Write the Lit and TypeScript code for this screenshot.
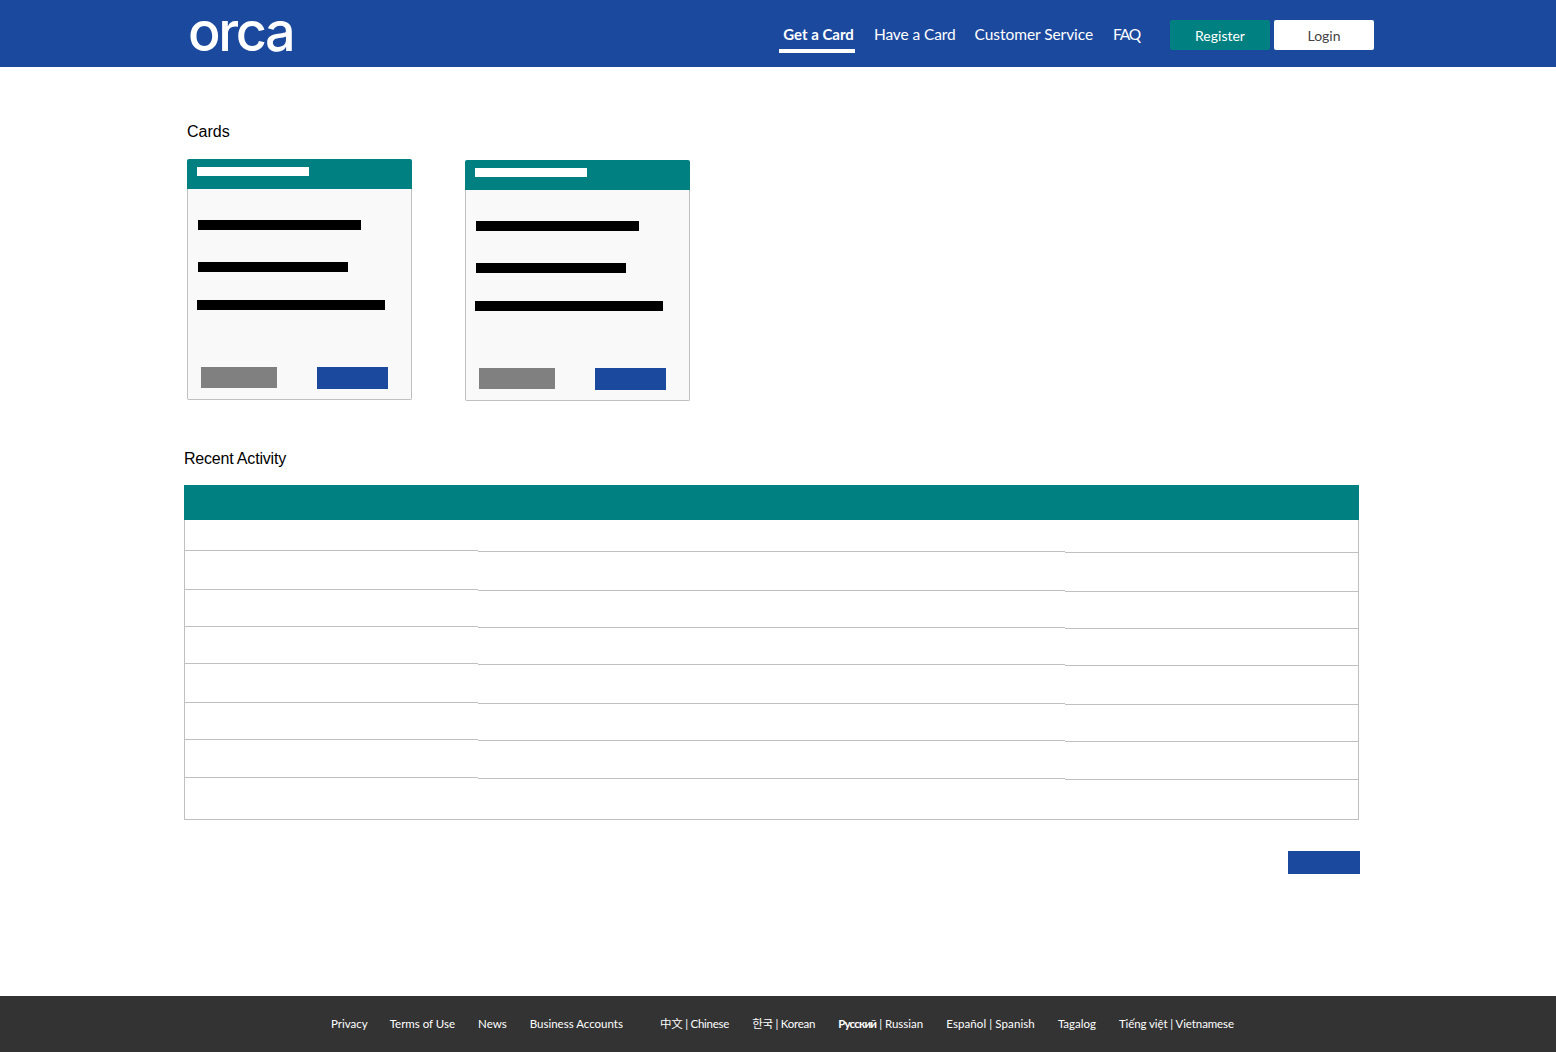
import { LitElement, html, css } from "lit";
import { customElement } from "lit/decorators.js";

const ROW_HEIGHTS = [39, 37, 37, 39, 37, 38];
const FIRST_ROW = [31, 32, 33];

@customElement("app-root")
export class AppRoot extends LitElement {
  static styles = css`
    :host {
      display: flex;
      flex-direction: column;
      min-height: 1052px;
      background: #fff;
      font-family: "Liberation Sans", Arial, sans-serif;
      color: #000;
    }
    .topbar {
      height: 67px;
      box-sizing: border-box;
      background: #1b499e;
      display: flex;
      align-items: center;
      padding: 3px 182px 0 188px;
      font-family: Lato, "Open Sans", sans-serif;
      color: #fff;
    }
    .logo {
      font-family: Inter, sans-serif;
      font-size: 54px;
      font-weight: 500;
      line-height: 67px;
      letter-spacing: -2.4px;
      margin-top: -7px;
    }
    .nav {
      margin-left: auto;
      display: flex;
      align-items: center;
    }
    .nav a {
      font-size: 15.5px;
      line-height: 20px;
      padding: 0 10px 2px;
    }
    .nav a.have {
      letter-spacing: -0.1px;
      padding-right: 9px;
    }
    .nav a.service {
      letter-spacing: -0.06px;
    }
    .nav a.faq {
      letter-spacing: -1.2px;
    }
    .nav a.active {
      font-size: 15px;
      font-weight: 700;
      padding: 3px 1px 5px 4px;
      margin-right: 9px;
      border-top: 4px solid transparent;
      border-bottom: 4px solid #fff;
    }
    .btn {
      width: 100px;
      height: 30px;
      border-radius: 2px;
      display: flex;
      align-items: center;
      justify-content: center;
      font-size: 14px;
    }
    .register {
      background: #008080;
      margin: 0 4px 0 20px;
    }
    .login {
      background: #fff;
      color: #444;
    }
    main {
      padding-left: 184px;
      width: 1176px;
    }
    h2 {
      font-size: 16px;
      font-weight: 400;
      line-height: 18px;
      margin: 0;
    }
    .cards-title {
      margin: 56px 0 18px 3px;
    }
    .cards {
      display: flex;
      gap: 53px;
      align-items: flex-start;
      margin-left: 3px;
    }
    .card + .card {
      margin-top: 1px;
    }
    .card {
      width: 225px;
    }
    .card-head {
      height: 30px;
      background: #008080;
      border-radius: 2px 2px 0 0;
      padding: 8px 0 0 10px;
      box-sizing: border-box;
    }
    .card-title {
      width: 112px;
      height: 9px;
      background: #fff;
    }
    .card-body {
      height: 211px;
      box-sizing: border-box;
      background: #f9f9f9;
      border: 1px solid #c0c0c0;
      border-top: none;
      border-radius: 0 0 2px 2px;
      padding-top: 31px;
    }
    .line {
      height: 10px;
      background: #000;
    }
    .line.a {
      width: 163px;
      margin-left: 10px;
    }
    .line.b {
      width: 150px;
      margin: 32px 0 0 10px;
    }
    .line.c {
      width: 188px;
      margin: 28px 0 0 9px;
    }
    .actions {
      display: flex;
      align-items: flex-start;
      margin: 57px 0 0 13px;
    }
    .ghost {
      width: 76px;
      height: 21px;
      background: #808080;
    }
    .primary {
      width: 71px;
      height: 22px;
      background: #1b499e;
      margin-left: 40px;
    }
    .activity-title {
      margin: 49px 0 17px;
      letter-spacing: -0.2px;
    }
    .table {
      width: 1175px;
    }
    .table-head {
      height: 35px;
      background: #008080;
    }
    .table-body {
      height: 300px;
      box-sizing: border-box;
      display: grid;
      grid-template-columns: 293px 587px 293px;
      border: 1px solid #c0c0c0;
      border-top: none;
    }
    .col {
      display: flex;
      flex-direction: column;
    }
    .cell {
      box-sizing: border-box;
      border-bottom: 1px solid #c0c0c0;
    }
    .cell.last {
      flex: 1;
      border-bottom: none;
    }
    .table-foot {
      display: flex;
      justify-content: flex-end;
      margin-top: 31px;
    }
    .more {
      width: 72px;
      height: 23px;
      background: #1b499e;
    }
    footer {
      margin-top: auto;
      height: 56px;
      box-sizing: border-box;
      background: #333;
      color: #fff;
      display: flex;
      align-items: center;
      padding: 0 0 2px 331px;
      font-family: Lato, "Noto Sans CJK SC", "Noto Sans CJK KR", sans-serif;
      font-size: 11.5px;
    }
    footer a {
      margin-right: 23px;
      white-space: nowrap;
    }
    footer a:first-child {
      margin-right: 22px;
    }
    footer a.wide {
      margin-right: 37px;
    }
    footer a.cjk {
      letter-spacing: -0.25px;
    }
    footer a.spanish {
      letter-spacing: 0.1px;
    }
    footer a.viet {
      letter-spacing: -0.1px;
    }
    footer b {
      font-weight: 700;
      letter-spacing: -0.8px;
    }
  `;

  renderCard() {
    return html`
      <div class="card">
        <div class="card-head"><div class="card-title"></div></div>
        <div class="card-body">
          <div class="line a"></div>
          <div class="line b"></div>
          <div class="line c"></div>
          <div class="actions">
            <div class="ghost"></div>
            <div class="primary"></div>
          </div>
        </div>
      </div>
    `;
  }

  renderColumn(first: number) {
    return html`
      <div class="col">
        <div class="cell" style="height: ${first}px"></div>
        ${ROW_HEIGHTS.map((h) => html`<div class="cell" style="height: ${h}px"></div>`)}
        <div class="cell last"></div>
      </div>
    `;
  }

  render() {
    return html`
      <header class="topbar">
        <div class="logo">orca</div>
        <nav class="nav">
          <a class="active">Get a Card</a>
          <a class="have">Have a Card</a>
          <a class="service">Customer Service</a>
          <a class="faq">FAQ</a>
          <div class="btn register">Register</div>
          <div class="btn login">Login</div>
        </nav>
      </header>
      <main>
        <h2 class="cards-title">Cards</h2>
        <div class="cards">${this.renderCard()} ${this.renderCard()}</div>
        <h2 class="activity-title">Recent Activity</h2>
        <div class="table">
          <div class="table-head"></div>
          <div class="table-body">${FIRST_ROW.map((h) => this.renderColumn(h))}</div>
        </div>
        <div class="table-foot"><div class="more"></div></div>
      </main>
      <footer>
        <a>Privacy</a>
        <a>Terms of Use</a>
        <a>News</a>
        <a class="wide">Business Accounts</a>
        <a class="cjk">中文 | Chinese</a>
        <a class="cjk">한국 | Korean</a>
        <a><b>Русский</b> | Russian</a>
        <a class="spanish">Español | Spanish</a>
        <a>Tagalog</a>
        <a class="viet">Tiếng việt | Vietnamese</a>
      </footer>
    `;
  }
}
